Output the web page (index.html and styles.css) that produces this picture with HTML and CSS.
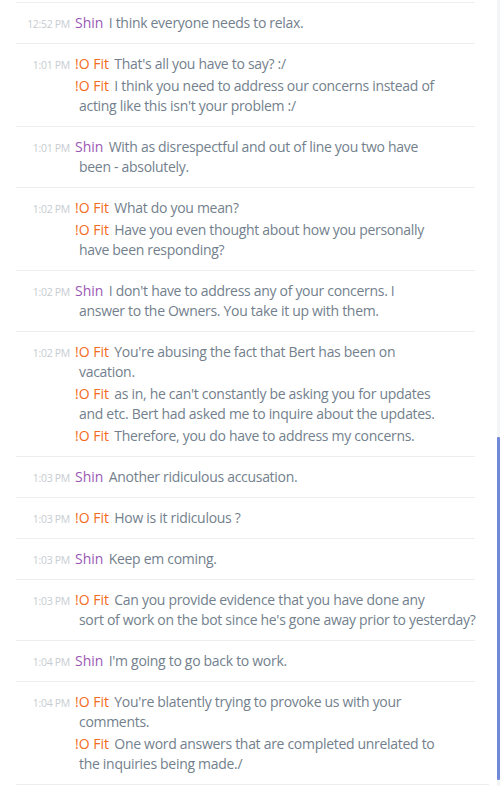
FILE: index.html
```html
<!DOCTYPE html>
<html>
<head>
<meta charset="utf-8">
<link rel="stylesheet" href="styles.css">
</head>
<body>
<div class="chat">
  <div class="group">
    <div class="time">12:52 PM</div>
    <div class="msgs">
      <div class="msg"><span class="actions"></span><span class="name shin">Shin</span> I think everyone needs to relax.</div>
    </div>
  </div>
  <div class="group">
    <div class="time">1:01 PM</div>
    <div class="msgs">
      <div class="msg"><span class="actions"></span><span class="name fit">!O Fit</span> That's all you have to say? :/</div>
      <div class="msg"><span class="actions"></span><span class="name fit">!O Fit</span> I think you need to address our concerns instead of acting like this isn't your problem :/</div>
    </div>
  </div>
  <div class="group">
    <div class="time">1:01 PM</div>
    <div class="msgs">
      <div class="msg"><span class="actions"></span><span class="name shin">Shin</span> With as disrespectful and out of line you two have been - absolutely.</div>
    </div>
  </div>
  <div class="group">
    <div class="time">1:02 PM</div>
    <div class="msgs">
      <div class="msg"><span class="actions"></span><span class="name fit">!O Fit</span> What do you mean?</div>
      <div class="msg"><span class="actions"></span><span class="name fit">!O Fit</span> Have you even thought about how you personally have been responding?</div>
    </div>
  </div>
  <div class="group">
    <div class="time">1:02 PM</div>
    <div class="msgs">
      <div class="msg"><span class="actions"></span><span class="name shin">Shin</span> I don't have to address any of your concerns. I answer to the Owners. You take it up with them.</div>
    </div>
  </div>
  <div class="group">
    <div class="time">1:02 PM</div>
    <div class="msgs">
      <div class="msg"><span class="actions"></span><span class="name fit">!O Fit</span> You're abusing the fact that Bert has been on vacation.</div>
      <div class="msg"><span class="actions"></span><span class="name fit">!O Fit</span> as in, he can't constantly be asking you for updates and etc. Bert had asked me to inquire about the updates.</div>
      <div class="msg"><span class="actions"></span><span class="name fit">!O Fit</span> Therefore, you do have to address my concerns.</div>
    </div>
  </div>
  <div class="group">
    <div class="time">1:03 PM</div>
    <div class="msgs">
      <div class="msg"><span class="actions"></span><span class="name shin">Shin</span> Another ridiculous accusation.</div>
    </div>
  </div>
  <div class="group">
    <div class="time">1:03 PM</div>
    <div class="msgs">
      <div class="msg"><span class="actions"></span><span class="name fit">!O Fit</span> How is it ridiculous ?</div>
    </div>
  </div>
  <div class="group">
    <div class="time">1:03 PM</div>
    <div class="msgs">
      <div class="msg"><span class="actions"></span><span class="name shin">Shin</span> Keep em coming.</div>
    </div>
  </div>
  <div class="group">
    <div class="time">1:03 PM</div>
    <div class="msgs">
      <div class="msg"><span class="actions"></span><span class="name fit">!O Fit</span> Can you provide evidence that you have done any sort of work on the bot since he's gone away prior to yesterday?</div>
    </div>
  </div>
  <div class="group">
    <div class="time">1:04 PM</div>
    <div class="msgs">
      <div class="msg"><span class="actions"></span><span class="name shin">Shin</span> I'm going to go back to work.</div>
    </div>
  </div>
  <div class="group">
    <div class="time">1:04 PM</div>
    <div class="msgs">
      <div class="msg"><span class="actions"></span><span class="name fit">!O Fit</span> You're blatently trying to provoke us with your comments.</div>
      <div class="msg"><span class="actions"></span><span class="name fit">!O Fit</span> One word answers that are completed unrelated to the inquiries being made./</div>
    </div>
  </div>
  <div class="end-rule"></div>
</div>
<div class="scrollbar">
  <div class="thumb"></div>
</div>
</body>
</html>
```

FILE: styles.css
```css
html, body {
  margin: 0;
  padding: 0;
  background: #ffffff;
}
body {
  width: 500px;
  height: 786px;
  overflow: hidden;
  display: flex;
  font-family: "Open Sans", "Lato", sans-serif;
  font-size: 14px;
  line-height: 20px;
  letter-spacing: -0.3px;
  color: #737f8d;
}
.chat {
  flex: 1;
  padding: 2px 22px 0 16px;
}
.group {
  display: flex;
  align-items: flex-start;
  border-top: 1px solid #eceeef;
  padding: 10px 0;
}
.time {
  width: 54px;
  height: 20px;
  box-sizing: border-box;
  flex: none;
  margin-right: 5px;
  padding-top: 2px;
  line-height: 18px;
  text-align: right;
  font-size: 10.5px;
  letter-spacing: -0.3px;
  color: #c7ccd1;
  white-space: nowrap;
}
.msgs {
  flex: 1;
  padding-left: 4px;
  margin-right: -3px;
}
.msg {
  text-indent: -4px;
}
.msg + .msg {
  margin-top: 2px;
}
.actions {
  float: right;
  width: 36px;
  height: 20px;
}
.name {
  margin-right: 2px;
  letter-spacing: 0;
}
.shin { color: #9b59b6; }
.fit { color: #f26b21; }
.end-rule {
  border-top: 1px solid #eceeef;
  margin-right: -14px;
}
.scrollbar {
  width: 3px;
  flex: none;
  background: #f3f4f5;
  display: flex;
  flex-direction: column;
}
.thumb {
  margin-top: 437px;
  height: 343px;
  background: #7289da;
  border-radius: 1px;
}
```
